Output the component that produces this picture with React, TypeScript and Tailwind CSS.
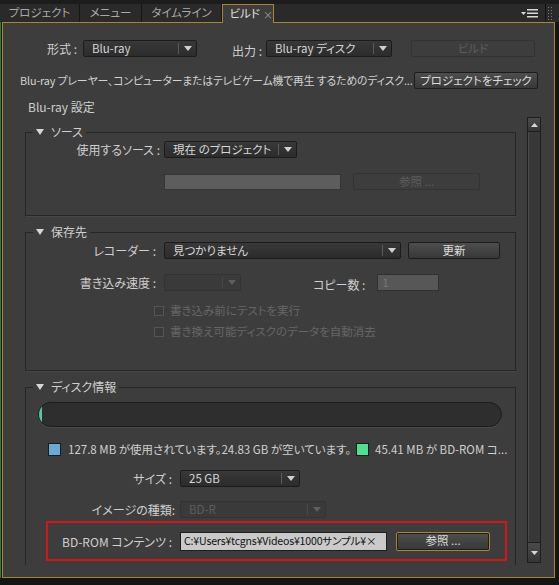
import React from 'react';

const FONT = "font-['Noto_Sans_CJK_JP','Noto_Sans',sans-serif] [font-feature-settings:'palt']";

const Arrow = ({ dim = false }: { dim?: boolean }) => (
  <svg width="8" height="5" viewBox="0 0 8 5">
    <polygon points="0,0 8,0 4,5" fill={dim ? '#5e5e5e' : '#d0d0d0'} />
  </svg>
);

const Dropdown = ({ w, value, disabled = false }: { w: string; value?: string; disabled?: boolean }) => (
  <div
    className={`${w} h-[17px] flex items-center border rounded-[2px] ${
      disabled ? 'border-[#333] bg-[#3a3a3a]' : 'border-[#1b1b1b] bg-gradient-to-b from-[#383838] to-[#2c2c2c]'
    }`}
  >
    <span
      className={`flex-1 pl-[8px] text-[11.5px] leading-[15px] whitespace-nowrap overflow-hidden ${
        disabled ? 'text-[#5e5e5e]' : 'text-[#d6d6d6]'
      }`}
    >
      {value}
    </span>
    <div className={`w-px h-[11px] ${disabled ? 'bg-[#484848]' : 'bg-[#5a5a5a]'}`} />
    <div className="w-[17px] flex items-center justify-center">
      <Arrow dim={disabled} />
    </div>
  </div>
);

const Button = ({ w, label, disabled = false, focused = false, h = 'h-[17px]' }: { w: string; label: string; disabled?: boolean; focused?: boolean; h?: string }) => (
  <div
    className={`${w} ${h} flex items-center justify-center border rounded-[2px] text-[11.5px] leading-none whitespace-nowrap ${
      disabled
        ? 'border-[#333] bg-[#3d3d3d] text-[#5e5e5e]'
        : focused
        ? 'border-[#a8862c] bg-gradient-to-b from-[#4e4e4e] to-[#383838] text-[#dcdcdc] shadow-[inset_0_0_0_1px_#1e1e1e]'
        : 'border-[#1c1c1c] bg-gradient-to-b from-[#4e4e4e] to-[#383838] text-[#dcdcdc]'
    }`}
  >
    {label}
  </div>
);

const Group = ({ title, className = '', children }: { title: string; className?: string; children: React.ReactNode }) => (
  <fieldset className={`border border-[#262626] shadow-[1px_1px_0_#474747] ${className}`}>
    <legend className="ml-[7px] px-[3px] flex items-center h-[14px] text-[12px] leading-[14px] text-[#cfcfcf]">
      <svg width="8" height="6" viewBox="0 0 8 6" className="mr-[7px]">
        <polygon points="0,0 8,0 4,6" fill="#d6d6d6" />
      </svg>
      {title}
    </legend>
    {children}
  </fieldset>
);

const Label = ({ w, text, pr = '' }: { w: string; text: string; pr?: string }) => (
  <span className={`${w} ${pr} text-right shrink-0 text-[12px] leading-[15px] text-[#cfcfcf] whitespace-nowrap`}>{text}</span>
);

const Checkbox = ({ label }: { label: string }) => (
  <div className="flex items-center h-[14px] ml-[128px]">
    <div className="w-[10px] h-[10px] border border-[#555] bg-[#3a3a3a]" />
    <span className="ml-[6px] text-[11.5px] leading-none text-[#666]">{label}</span>
  </div>
);

const Grip = ({ className = '' }: { className?: string }) => (
  <svg width="4" height="13" viewBox="0 0 4 13" className={className}>
    {[0, 3, 6, 9, 12].map((y) => (
      <g key={y}>
        <rect x="0" y={y} width="1" height="1" fill="#7a7a7a" />
        <rect x="3" y={y} width="1" height="1" fill="#7a7a7a" />
      </g>
    ))}
  </svg>
);

const Tab = ({ w, label }: { w: string; label: string }) => (
  <div className={`${w} h-[18px] bg-[#2a2a2a] border-r border-[#161616] flex items-center justify-center text-[11.5px] text-[#a9a9a9] whitespace-nowrap`}>
    {label}
  </div>
);

export default function App() {
  return (
    <div className={`w-[559px] h-[585px] bg-[#141414] flex flex-col overflow-hidden ${FONT}`}>
      {/* Tab bar */}
      <div className="h-[22px] bg-[#1c1c1c] pt-[4px] flex items-start shrink-0">
        <Tab w="w-[80px]" label="プロジェクト" />
        <Tab w="w-[62px]" label="メニュー" />
        <Tab w="w-[80px]" label="タイムライン" />
        <div className="relative z-10 w-[52px] h-[19px] bg-[#3d3d3d] border-x border-t border-[#a8862c] flex items-center pl-[3px] text-[11.5px] text-[#e0e0e0] whitespace-nowrap">
          <Grip />
          <span className="ml-[3px]">ビルド</span>
          <span className="ml-[3px] text-[10px] text-[#9a9a9a]">×</span>
        </div>
        <div className="flex-1 h-[18px] bg-[#2a2a2a] flex items-center justify-end">
          <svg width="17" height="9" viewBox="0 0 17 9" className="mr-[7px]">
            <polygon points="0,3 5,3 2.5,6" fill="#d8d8d8" />
            <rect x="6" y="0" width="11" height="1.5" fill="#d8d8d8" />
            <rect x="6" y="3.5" width="11" height="1.5" fill="#d8d8d8" />
            <rect x="6" y="7" width="11" height="1.5" fill="#d8d8d8" />
          </svg>
        </div>
        <div className="w-px h-[18px] bg-[#111]" />
        <div className="w-[13px] h-[18px] bg-[#2a2a2a] flex items-center justify-start pl-[2px]">
          <Grip />
        </div>
      </div>

      <div className="flex flex-1">
        <div className="w-[2px] h-[556px] bg-[#1a1a1a] border-l border-[#3d7a25]" />
        {/* Panel */}
        <div className="w-[553px] h-[556px] border border-[#a8862c] bg-[#3d3d3d] flex flex-col">
          {/* Row 1 */}
          <div className="mt-[17px] h-[17px] flex items-center pl-[40px]">
            <Label w="w-[34px]" text="形式 :" />
            <div className="ml-[6px]">
              <Dropdown w="w-[114px]" value="Blu-ray" />
            </div>
            <div className="ml-[35px]">
              <Label w="w-[33px]" text="出力 :" />
            </div>
            <div className="ml-[4px]">
              <Dropdown w="w-[126px]" value="Blu-ray ディスク" />
            </div>
            <div className="ml-[19px]">
              <Button w="w-[124px]" label="ビルド" disabled />
            </div>
          </div>

          {/* Row 2 */}
          <div className="mt-[15px] h-[17px] flex items-center pl-[17px]">
            <span className="w-[394px] overflow-hidden whitespace-nowrap text-[10.8px] leading-[15px] tracking-[-0.1px] text-[#d2d2d2]">
              Blu-ray プレーヤー、コンピューターまたはテレビゲーム機で再生 するためのディスク...
            </span>
            <Button w="w-[124px]" label="プロジェクトをチェック" />
          </div>

          {/* Row 3 */}
          <div className="mt-[9px] h-[18px] flex items-center pl-[25px] text-[12px] text-[#cfcfcf]">Blu-ray 設定</div>

          {/* Scroll area */}
          <div className="mt-[1px] h-[448px] flex pl-[22px]">
            <div className="w-[491px] h-[448px] overflow-hidden flex flex-col">
              <Group title="ソース" className="mt-[8px] pb-[25px]">
                <div className="mt-[2px] h-[17px] flex items-center">
                  <Label w="w-[134px]" text="使用するソース :" />
                  <div className="ml-[4px]">
                    <Dropdown w="w-[133px]" value="現在 のプロジェクト" />
                  </div>
                </div>
                <div className="mt-[15px] h-[17px] flex items-center pl-[138px]">
                  <div className="w-[177px] h-[16px] bg-[#5d5d5d] border border-[#353535]" />
                  <div className="ml-[12px]">
                    <Button w="w-[127px]" label="参照 ..." disabled />
                  </div>
                </div>
              </Group>

              <Group title="保存先" className="mt-[9px] pb-[31px]">
                <div className="mt-[3px] h-[17px] flex items-center">
                  <Label w="w-[134px]" pr="pr-[4px]" text="レコーダー :" />
                  <div className="ml-[4px]">
                    <Dropdown w="w-[237px]" value="見つかりません" />
                  </div>
                  <div className="ml-[7px]">
                    <Button w="w-[92px]" label="更新" />
                  </div>
                </div>
                <div className="mt-[15px] h-[17px] flex items-center">
                  <Label w="w-[134px]" pr="pr-[4px]" text="書き込み速度 :" />
                  <div className="ml-[4px]">
                    <Dropdown w="w-[77px]" disabled />
                  </div>
                  <div className="ml-[72px]">
                    <Label w="w-[49px]" text="コピー数 :" />
                  </div>
                  <div className="ml-[12px] w-[62px] h-[17px] bg-[#575757] border border-[#303030] flex items-center pl-[4px] text-[11px] text-[#777]">
                    1
                  </div>
                </div>
                <div className="mt-[13px]">
                  <Checkbox label="書き込み前にテストを実行" />
                </div>
                <div className="mt-[7px]">
                  <Checkbox label="書き換え可能ディスクのデータを自動消去" />
                </div>
              </Group>

              <Group title="ディスク情報" className="mt-[9px] pb-[40px]">
                <div className="mt-[8px] ml-[12px] w-[464px] h-[25px] rounded-full border border-[#1c1c1c] bg-[#2e2e2e] overflow-hidden flex shadow-[0_1px_0_#4a4a4a]">
                  <div className="w-[3px] h-full bg-[#5cc4a4] rounded-l-full" />
                </div>
                <div className="mt-[16px] h-[13px] flex items-center ml-[22px] text-[11.5px] leading-none text-[#cfcfcf]">
                  <div className="w-[13px] h-[13px] bg-[#6aa9d6] border border-[#1c1c1c]" />
                  <span className="ml-[7px] w-[282px] whitespace-nowrap">127.8 MB が使用されています。24.83 GB が空いています。</span>
                  <div className="ml-[6px] w-[13px] h-[13px] bg-[#4fe08f] border border-[#1c1c1c]" />
                  <span className="ml-[6px] whitespace-nowrap">45.41 MB が BD-ROM コ...</span>
                </div>
                <div className="mt-[14px] h-[17px] flex items-center">
                  <Label w="w-[146px]" text="サイズ :" />
                  <div className="ml-[8px]">
                    <Dropdown w="w-[120px]" value="25 GB" />
                  </div>
                </div>
                <div className="mt-[14px] h-[17px] flex items-center">
                  <Label w="w-[149px]" text="イメージの種類:" />
                  <div className="ml-[5px]">
                    <Dropdown w="w-[146px]" value="BD-R" disabled />
                  </div>
                </div>
                <div className="mt-[3px] ml-[20px] w-[461px] h-[40px] border-2 border-[#d41616] flex items-center">
                  <Label w="w-[124px]" text="BD-ROM コンテンツ :" />
                  <div className="ml-[8px] w-[207px] h-[19px] bg-[#cacaca] border border-[#1e1e1e] flex items-center pl-[3px] text-[10.6px] leading-none tracking-[-0.2px] text-[#111] whitespace-nowrap overflow-hidden">
                    C:¥Users¥tcgns¥Videos¥1000サンプル¥×
                  </div>
                  <div className="ml-[9px]">
                    <Button w="w-[94px]" h="h-[19px]" label="参照 ..." focused />
                  </div>
                </div>
              </Group>
            </div>

            {/* Scrollbar */}
            <div className="ml-[11px] w-[14px] h-[448px] flex flex-col">
              <div className="h-[15px] border border-[#1e1e1e] bg-gradient-to-b from-[#4a4a4a] to-[#363636] flex items-center justify-center">
                <svg width="7" height="4" viewBox="0 0 7 4">
                  <polygon points="0,4 7,4 3.5,0" fill="#d8d8d8" />
                </svg>
              </div>
              <div className="flex-1 border-x border-b border-[#1e1e1e] bg-[#383838] shadow-[inset_1px_0_0_#4a4a4a]" />
              <div className="h-[20px] border-x border-b border-[#1e1e1e] bg-gradient-to-b from-[#4a4a4a] to-[#363636] flex items-center justify-center">
                <svg width="7" height="4" viewBox="0 0 7 4">
                  <polygon points="0,0 7,0 3.5,4" fill="#d8d8d8" />
                </svg>
              </div>
              <div className="h-[2px]" />
            </div>
          </div>
        </div>
      </div>
    </div>
  );
}
